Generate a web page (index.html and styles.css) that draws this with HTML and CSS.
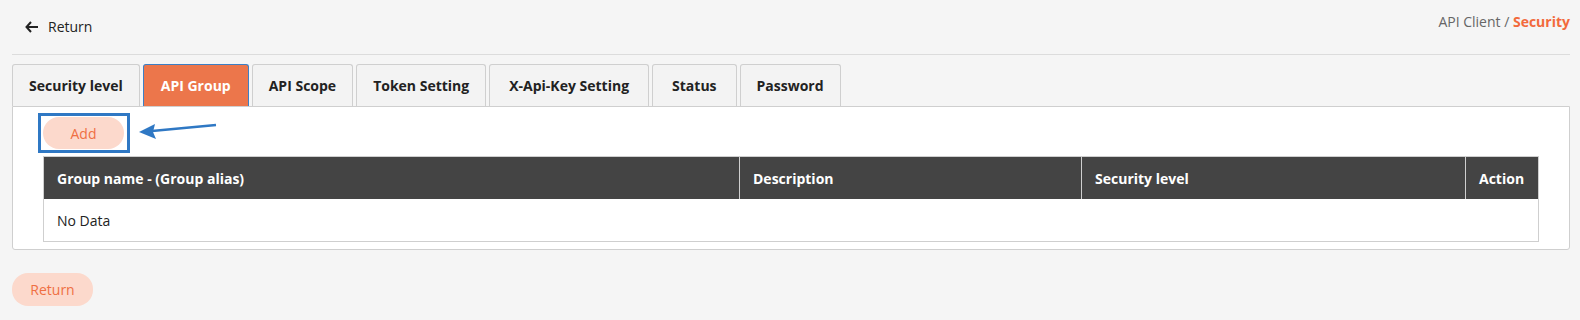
FILE: index.html
```html
<!DOCTYPE html>
<html lang="en">
<head>
  <meta charset="UTF-8">
  <meta name="viewport" content="width=device-width, initial-scale=1.0">
  <title>API Client Security</title>
  <link rel="stylesheet" href="styles.css">
</head>
<body>
  <header class="topbar">
    <a class="back" href="#">
      <svg width="14" height="12" viewBox="0 0 14 12"><path d="M6 1 1.5 6 6 11M1.5 6H13" fill="none" stroke="#222" stroke-width="2"/></svg>
      Return
    </a>
    <div class="crumbs">API Client / <b>Security</b></div>
  </header>

  <nav class="tabs">
    <div class="tab">Security level</div>
    <div class="tab active">API Group</div>
    <div class="tab">API Scope</div>
    <div class="tab">Token Setting</div>
    <div class="tab wide">X-Api-Key Setting</div>
    <div class="tab wide">Status</div>
    <div class="tab">Password</div>
  </nav>

  <section class="panel">
    <div class="toolbar">
      <div class="focus"><button class="pill">Add</button></div>
      <svg class="arrow" width="82" height="20" viewBox="0 0 82 20">
        <path d="M14 12 L78 6" stroke="#2f78c4" stroke-width="2.5" fill="none"/>
        <path d="M1 13 L17 5 L15 13 L18 20 Z" fill="#2f78c4"/>
      </svg>
    </div>
    <table class="grid">
      <thead>
        <tr>
          <th class="c1">Group name - (Group alias)</th>
          <th class="c2">Description</th>
          <th class="c3">Security level</th>
          <th class="c4">Action</th>
        </tr>
      </thead>
      <tbody>
        <tr><td colspan="4">No Data</td></tr>
      </tbody>
    </table>
  </section>

  <button class="pill bottom">Return</button>
</body>
</html>
```

FILE: styles.css
```css
html, body {
  margin: 0;
  padding: 0;
  background: #f5f5f5;
  font-family: "Open Sans", "Liberation Sans", sans-serif;
  font-size: 14px;
  color: #333;
}
body {
  padding: 0 10px 0 12px;
}
.topbar {
  display: flex;
  justify-content: space-between;
  align-items: flex-start;
  height: 55px;
  border-bottom: 1px solid #dcdcdc;
  box-sizing: border-box;
}
.back {
  display: flex;
  align-items: center;
  gap: 9px;
  margin: 17px 0 0 13px;
  color: #222;
  text-decoration: none;
  font-size: 14px;
}
.crumbs {
  margin-top: 12px;
  color: #666;
  font-size: 14px;
}
.crumbs b {
  color: #f26a3c;
}
.tabs {
  display: flex;
  gap: 3px;
  margin-top: 9px;
}
.tab {
  height: 42px;
  box-sizing: border-box;
  padding: 0 16px;
  display: flex;
  align-items: center;
  border: 1px solid #cfcfcf;
  border-bottom: none;
  border-radius: 3px 3px 0 0;
  background: #f3f3f3;
  font-weight: 700;
  color: #222;
}
.tab.wide {
  padding: 0 19px;
}
.tab.active {
  background: #ec764b;
  color: #fff;
  border-color: #3d7fc4;
  padding: 0 17px;
}
.panel {
  background: #fff;
  border: 1px solid #cfcfcf;
  border-radius: 0 0 3px 3px;
  padding: 6px 30px 7px 30px;
}
.toolbar {
  display: flex;
  align-items: center;
  gap: 8px;
  margin-left: -5px;
}
.focus {
  border: 3px solid #2f78c4;
  padding: 1px 0 0 2px;
  width: 84px;
  height: 33px;
}
.pill {
  border: none;
  border-radius: 16px;
  background: #fcd9cc;
  color: #ef6f43;
  font-family: inherit;
  font-size: 14px;
  width: 81px;
  height: 32px;
}
.arrow {
  margin-top: -8px;
}
.grid {
  width: 100%;
  border-collapse: collapse;
  margin-top: 3px;
  border: 1px solid #cfcfcf;
}
.grid th {
  background: #444;
  color: #fff;
  text-align: left;
  font-weight: 700;
  height: 42px;
  padding: 0 13px;
  border-left: 1px solid #cfcfcf;
}
.grid th:first-child {
  border-left: none;
}
.c1 { width: 669px; }
.c2 { width: 315px; }
.c3 { width: 357px; }
.grid td {
  height: 42px;
  padding: 0 13px;
  color: #222;
}
.bottom {
  margin-top: 23px;
  width: 81px;
  height: 33px;
}
```
